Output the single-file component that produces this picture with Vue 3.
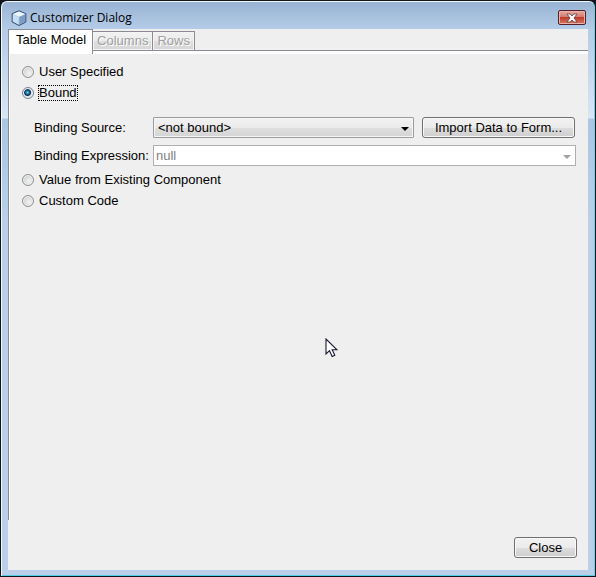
<script setup>
import { ref } from 'vue'

const mode = ref('bound')
const source = ref('<not bound>')
const expression = ref('null')
</script>

<template>
  <div class="window">
    <div class="frame">
      <header class="titlebar">
        <svg class="logo" viewBox="0 0 16 16" aria-hidden="true">
          <path d="M8 .8 14.8 3.7V12L8 15.5 1.2 12V3.7Z" fill="#a9c3df" stroke="#2f4672" stroke-width="1" stroke-linejoin="round" />
          <path d="M8 1.400 14 4 8 6.800 2 4Z" fill="#edf6fc" />
          <path d="M1.800 4.600 7.700 7.100V14.600L1.800 11.600Z" fill="#c3def2" />
          <path d="M8.300 7.100 14.200 4.600V11.600L8.300 14.600Z" fill="#7f9cc4" />
        </svg>
        <h1 class="title">Customizer Dialog</h1>
        <button class="shut" type="button" aria-label="Close window">
          <svg viewBox="0 0 12 10" aria-hidden="true">
            <path d="M1 1H4.200L6 3 7.800 1H11L8 5 11 9H7.800L6 7 4.200 9H1L4 5Z" fill="#fff" stroke="#5d3c48" stroke-width=".8" />
          </svg>
        </button>
      </header>

      <main class="content">
        <div class="pane">
          <nav class="tabs" role="tablist">
            <button class="tab active" type="button" role="tab" aria-selected="true">Table Model</button>
            <button class="tab" type="button" role="tab" aria-selected="false" disabled>Columns</button>
            <button class="tab" type="button" role="tab" aria-selected="false" disabled>Rows</button>
          </nav>
          <form class="form" @submit.prevent>
            <label class="option"><input v-model="mode" type="radio" name="mode" value="user"><span>User Specified</span></label>
            <label class="option"><input v-model="mode" type="radio" name="mode" value="bound"><span class="focused">Bound</span></label>
            <div class="binding">
              <label for="source">Binding Source:</label>
              <div class="pair">
                <div class="combo">
                  <select id="source" v-model="source"><option>&lt;not bound&gt;</option></select>
                  <svg class="arrow" viewBox="0 0 8 4" aria-hidden="true"><path d="M0 0H8L4 4Z" fill="#000" /></svg>
                </div>
                <button class="push import" type="button">Import Data to Form...</button>
              </div>
              <label for="expression">Binding Expression:</label>
              <div class="combo plain">
                <select id="expression" v-model="expression" disabled><option>null</option></select>
                <svg class="arrow" viewBox="0 0 8 4" aria-hidden="true"><path d="M0 0H8L4 4Z" fill="#a0a0a0" /></svg>
              </div>
            </div>
            <label class="option"><input v-model="mode" type="radio" name="mode" value="component"><span>Value from Existing Component</span></label>
            <label class="option"><input v-model="mode" type="radio" name="mode" value="code"><span>Custom Code</span></label>
          </form>
        </div>
        <footer class="actions">
          <button class="push close" type="button">Close</button>
        </footer>
      </main>
    </div>
    <svg class="pointer" viewBox="0 0 13 20" aria-hidden="true">
      <path d="M1 1V16L4.500 12.700 7.200 18.500 9.800 17.300 7.200 11.800H12Z" fill="#fff" stroke="#161a35" stroke-width="1.1" />
    </svg>
  </div>
</template>

<style>
body {
  background: #10141c;
}
</style>

<style scoped>
* {
  box-sizing: border-box;
}

.window {
  position: relative;
  display: flex;
  min-height: 100vh;
  padding: 1px;
  font: 13px/16px "Liberation Sans", Arial, sans-serif;
  color: #000;
}

.frame {
  flex: 1;
  display: flex;
  flex-direction: column;
  padding: 0 6px 5px;
  border: 1px solid #f4f9fd;
  border-right-color: #5fd5ea;
  border-bottom-color: #4fd0e6;
  border-radius: 6px 6px 0 0;
  background: linear-gradient(#98b3d3 0, #b4cce7 27px, #d8e6f5 116px, #a9c6e4 117px, #bad0ea 220px);
}

.titlebar {
  display: flex;
  align-items: center;
  height: 27px;
  padding: 4px 2px 0;
}

.logo {
  width: 16px;
  height: 16px;
  margin-left: 1px;
}

.title {
  flex: 1;
  margin: 0 0 0 3px;
  font: 12px/16px "Open Sans", "Noto Sans", sans-serif;
}

.shut {
  display: flex;
  align-items: center;
  justify-content: center;
  width: 28px;
  height: 15px;
  padding: 0;
  border: 1px solid #54202c;
  border-radius: 2px;
  background: linear-gradient(#e7aaa2 0, #d4776c 48%, #bd3d2b 50%, #d9765c 100%);
  box-shadow: inset 0 0 0 1px #e9b3aa;
}

.shut svg {
  width: 12px;
  height: 10px;
}

.content {
  flex: 1;
  display: flex;
  flex-direction: column;
  background: #efefef;
}

.pane {
  flex: 1;
  display: flex;
  flex-direction: column;
  border-left: 1px solid #8a8c96;
}

.tabs {
  display: flex;
  align-items: flex-end;
  height: 25px;
  padding-bottom: 3px;
  background: linear-gradient(#efefef 21px, #898c95 21px, #898c95 22px, #fff 22px);
}

.tab {
  height: 20px;
  padding: 0 4px;
  border: 1px solid #898c95;
  border-left: 0;
  background: linear-gradient(#f2f2f2 0, #ebebeb 50%, #dfdfdf 50%, #d6d6d6 100%);
  box-shadow: inset 0 0 0 1px #f4f4f4;
  font: inherit;
  color: #a0a0a0;
  text-shadow: 1px 1px #fff;
}

.tab.active {
  align-self: flex-start;
  height: 25px;
  margin-bottom: -3px;
  padding: 0 6px 4px 7px;
  border-bottom: 0;
  background: #fff;
  box-shadow: none;
  color: #000;
  text-shadow: none;
}

.form {
  flex: 1;
  display: flex;
  flex-direction: column;
  padding: 7px 12px 0;
  border-left: 1px solid #fff;
}

.option {
  display: flex;
  align-items: center;
  align-self: flex-start;
  gap: 4px;
  height: 21px;
}

.option input {
  appearance: none;
  width: 12px;
  height: 12px;
  margin: 0;
  border: 1px solid #8e8f8f;
  border-radius: 50%;
  background: radial-gradient(circle at 60% 60%, #f4f4f4 0, #c9ccd0 80%);
  box-shadow: inset 0 0 0 1px #f4f4f4;
}

.option input:checked {
  border-color: #6f8298;
  background: radial-gradient(circle at 45% 45%, #6fd0f0 0, #16618f 2px, #0c2f50 3px, #d8e0e6 4px);
}

.focused {
  outline: 1px dotted #000;
  outline-offset: -1px;
}

.option span {
  padding: 0 1px;
}

.binding {
  display: grid;
  grid-template-columns: 113px 1fr;
  column-gap: 6px;
  row-gap: 7px;
  align-items: center;
  padding: 14px 0 3px 12px;
  white-space: nowrap;
}

.pair {
  display: flex;
  gap: 8px;
  padding-right: 1px;
}

.combo {
  flex: 1;
  display: flex;
  position: relative;
}

.combo select {
  appearance: none;
  width: 100%;
  height: 21px;
  padding: 0 20px 0 4px;
  border: 1px solid #9a9ca0;
  border-radius: 1px;
  background: linear-gradient(#f2f2f2 0, #ebebeb 50%, #dfdfdf 50%, #d4d4d4 100%);
  box-shadow: inset 0 0 0 1px #f6f6f6;
  font: inherit;
  color: #000;
}

.combo.plain select {
  padding-left: 2px;
  border-color: #afafaf;
  border-radius: 0;
  background: #fff;
  box-shadow: none;
  color: #808080;
  opacity: 1;
}

.arrow {
  position: absolute;
  right: 5px;
  top: 10px;
  width: 8px;
  height: 4px;
  pointer-events: none;
}

.push {
  height: 21px;
  padding: 0;
  border: 1px solid #707070;
  border-radius: 3px;
  background: linear-gradient(#f2f2f2 0, #ebebeb 50%, #dddddd 50%, #cfcfcf 100%);
  box-shadow: inset 0 0 0 1px #f8f8f8;
  font: inherit;
  color: #000;
}

.import {
  width: 153px;
}

.close {
  width: 63px;
}

.actions {
  display: flex;
  justify-content: flex-end;
  padding: 17px 11px 12px;
}

.pointer {
  position: absolute;
  left: 325px;
  top: 338px;
  width: 13px;
  height: 20px;
  pointer-events: none;
}
</style>
